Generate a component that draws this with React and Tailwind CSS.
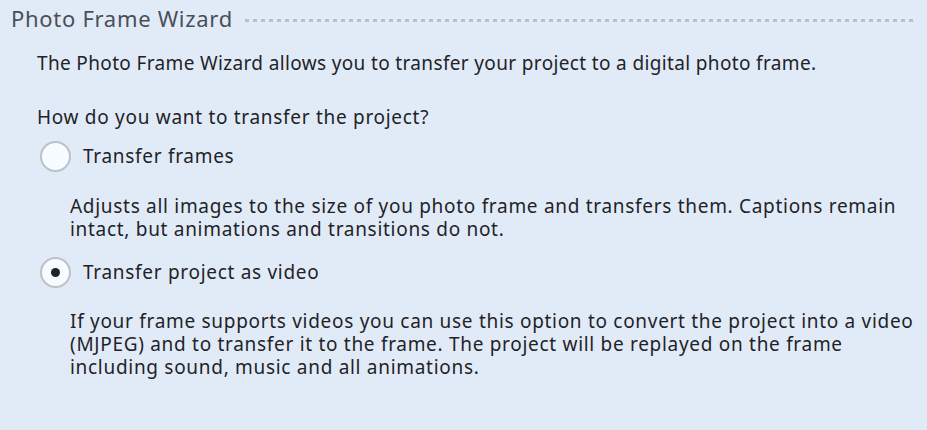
export default function App() {
  const font = { fontFamily: '"Noto Sans", "Open Sans", sans-serif' };
  return (
    <div className="w-[927px] h-[430px] bg-[#e1ebf7] overflow-hidden" style={font}>
      <div className="flex items-center pl-[11px] pr-[10px] pt-[5px]">
        <span className="text-[22px] tracking-[0.7px] text-[#4a4f57] leading-[26px] whitespace-nowrap">Photo Frame Wizard</span>
        <div className="flex-1 ml-[12px] mt-[4px] h-[3px] bg-[repeating-linear-gradient(to_right,#b9c0ca_0_4px,transparent_4px_8px)]" />
      </div>
      <div className="pl-[37px] text-[19px] tracking-[0.7px] text-[#1f2328] leading-[23px] whitespace-nowrap">
        <p className="mt-[21px] tracking-[0.35px]">The Photo Frame Wizard allows you to transfer your project to a digital photo frame.</p>
        <p className="mt-[31px]">How do you want to transfer the project?</p>
        <div className="mt-[12px] flex items-center ml-[3px]">
          <div className="w-[31px] h-[31px] rounded-full border-2 border-[#bcc1c9] bg-[#f6fcff]" />
          <span className="ml-[12px]">Transfer frames</span>
        </div>
        <p className="mt-[23px] ml-[33px]">Adjusts all images to the size of you photo frame and transfers them. Captions remain<br />intact, but animations and transitions do not.</p>
        <div className="mt-[16px] flex items-center ml-[3px]">
          <div className="w-[31px] h-[31px] rounded-full border-2 border-[#bcc1c9] bg-[#f6fcff] flex items-center justify-center">
            <div className="w-[9px] h-[9px] rounded-full bg-[#1f2328]" />
          </div>
          <span className="ml-[12px]">Transfer project as video</span>
        </div>
        <p className="mt-[22px] ml-[33px]">If your frame supports videos you can use this option to convert the project into a video<br />(MJPEG) and to transfer it to the frame. The project will be replayed on the frame<br />including sound, music and all animations.</p>
      </div>
    </div>
  );
}
